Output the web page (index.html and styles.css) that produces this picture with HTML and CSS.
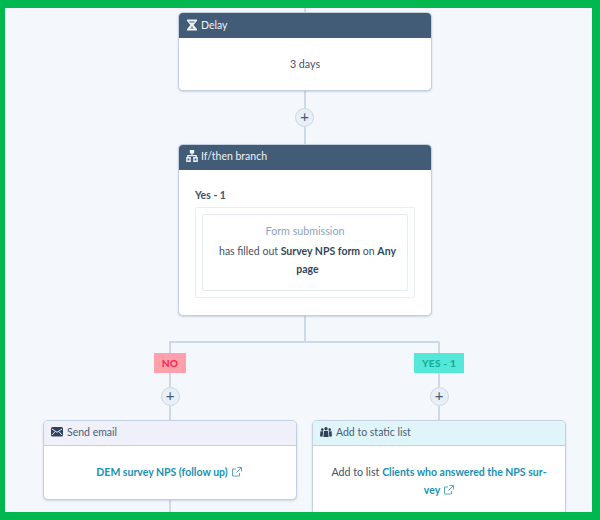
FILE: index.html
```html
<!DOCTYPE html>
<html lang="en">
<head>
<meta charset="utf-8">
<title>Workflow</title>
<link rel="stylesheet" href="styles.css">
</head>
<body>
<div class="frame">
  <div class="line v l-top"></div>
  <div class="line v l-mid"></div>
  <div class="line v l-trunk"></div>
  <div class="line h l-split"></div>
  <div class="line v l-no"></div>
  <div class="line v l-yes"></div>
  <div class="line v l-tail"></div>

  <section class="card delay">
    <header class="head dark">
      <svg class="ico" viewBox="0 0 12 12"><path fill="currentColor" d="M1 .5h10v2H10C9.800 4.200 8.300 5 7.500 6c.8 1 2.300 1.800 2.500 3.500h1v2H1v-2h1C2.200 7.800 3.700 7 4.500 6 3.700 5 2.200 4.200 2 2.500H1z"/><path fill="#425b76" d="M3.300 2.500h5.400c-.1.400-.2.700-.4 1H3.700c-.2-.3-.3-.6-.4-1zM5.600 7.200h.8v1.300l1.600 1.100H4L5.600 8.500z"/></svg>
      <span>Delay</span>
    </header>
    <div class="body plain">3 days</div>
  </section>

  <button class="plus p-mid">+</button>

  <section class="card branch">
    <header class="head dark head-branch">
      <svg class="ico" viewBox="0 0 12 12"><path fill="currentColor" d="M3.800 0h4.400v3.600H6.600V5h4.200v2h1v5H7.200V7h2.200v-.8H2.600V7h2.200v5H.2V7h1V5h4.200V3.600H3.800zM1.600 8.500v2h1.800v-2zM8.600 8.500v2h1.800v-2z"/></svg>
      <span>If/then branch</span>
    </header>
    <div class="branch-body">
      <div class="yes-title">Yes - 1</div>
      <div class="outer">
        <div class="inner">
          <div class="muted">Form submission</div>
          <p class="filter">has filled out <b>Survey NPS form</b> on <b>Any</b> <b>page</b></p>
        </div>
      </div>
    </div>
  </section>

  <div class="tag tag-no">NO</div>
  <div class="tag tag-yes">YES - 1</div>
  <button class="plus p-no">+</button>
  <button class="plus p-yes">+</button>

  <section class="card email">
    <header class="head lilac">
      <svg class="ico wide" viewBox="0 0 12 10"><rect width="12" height="9.500" rx="1.500" fill="#2f4259"/><path fill="none" stroke="#e6e9f5" stroke-width="1" d="M1 2l5 3.300L11 2M1 8l3.200-3.500M11 8L7.800 4.500"/></svg>
      <span>Send email</span>
    </header>
    <div class="body plain email-body">
      <a class="link">DEM survey NPS (follow up)<svg class="ext" viewBox="0 0 10 10"><path fill="none" stroke="currentColor" stroke-width="1" d="M7.500 6v3h-7V2h3.500M5.500.5h4v4M9.500.5L4.500 5.500"/></svg></a>
    </div>
  </section>

  <section class="card list">
    <header class="head sky">
      <svg class="ico wide" viewBox="0 0 12 10"><g fill="#2f4259"><circle cx="6" cy="1.700" r="1.700"/><circle cx="2.300" cy="2.600" r="1.300"/><circle cx="9.700" cy="2.600" r="1.300"/><path d="M3.900 4h4.200l.5 6H3.400zM.4 4.300h2.700L2.700 9.500H0zM8.900 4.300h2.700l.4 5.200H9.300z"/></g></svg>
      <span>Add to static list</span>
    </header>
    <div class="body list-body">
      <p>Add to list <a class="link">Clients who answered the NPS sur&shy;vey<svg class="ext" viewBox="0 0 10 10"><path fill="none" stroke="currentColor" stroke-width="1" d="M7.500 6v3h-7V2h3.500M5.500.5h4v4M9.500.5L4.500 5.500"/></svg></a></p>
    </div>
  </section>
</div>
</body>
</html>
```

FILE: styles.css
```css
* { box-sizing: border-box; }
html, body { margin: 0; padding: 0; }
body { width: 600px; height: 520px; overflow: hidden; font-family: Lato, "Open Sans", sans-serif; color: #3f5369; font-size: 10.700px; }
.frame { position: relative; width: 600px; height: 520px; border: solid #00b84f; border-width: 8px 8px 8px 5px; background: #f4f7fb; overflow: hidden; }

.line { position: absolute; background: #cdd9e6; }
.line.v { width: 2px; }
.line.h { height: 2px; }
.l-top { left: 298.500px; top: 0; height: 8px; }
.l-mid { left: 298.500px; top: 80px; height: 60px; }
.l-trunk { left: 298.500px; top: 305px; height: 30px; }
.l-split { left: 164px; top: 333px; width: 270px; }
.l-no { left: 164px; top: 334px; height: 80px; }
.l-yes { left: 433px; top: 334px; height: 80px; }
.l-tail { left: 164px; top: 490px; height: 20px; }

.card { position: absolute; display: flex; flex-direction: column; width: 254px; background: #fff; border: 1px solid #c3d0df; border-radius: 5px; overflow: hidden; box-shadow: 0 1px 2px rgba(120,145,175,.35); }
.delay { left: 173px; top: 4px; height: 79px; }
.branch { left: 173px; top: 136px; height: 172px; }
.email { left: 38px; top: 412px; height: 80px; }
.list { left: 307px; top: 412px; height: 110px; }

.head { display: flex; align-items: center; gap: 3px; height: 25px; flex: none; padding: 0 7px 2px; font-size: 10.500px; }
.head-branch { padding-bottom: 4px; }
.dark { background: #425b76; color: #eef2f7; }
.lilac { background: #f0f0fb; border-bottom: 1px solid #c3d0df; color: #4a5d72; gap: 4px; }
.sky { background: #e0f5fa; border-bottom: 1px solid #c3d0df; color: #4a5d72; gap: 4px; }
.ico { width: 12px; height: 12px; flex: none; }
.ico.wide { width: 12px; height: 10px; }

.body { flex: 1; display: flex; align-items: center; justify-content: center; text-align: center; }
.plain { color: #3f5369; padding-bottom: 2px; }
.email-body { padding-right: 2px; }
.list-body { align-items: flex-start; padding: 17px 14px 0; }
.list-body p { margin: 0; line-height: 18px; }

.link { color: #1a91b3; font-weight: 700; font-size: 10.500px; }
.ext { width: 10px; height: 10px; margin-left: 4px; vertical-align: -1px; color: #5fa6c2; }

.branch-body { padding: 18px 16px 0; }
.yes-title { font-weight: 700; font-size: 10.500px; line-height: 14px; margin-bottom: 5px; }
.outer { padding: 6px; border: 1px solid #e9eef5; border-radius: 2px; height: 91px; }
.inner { height: 77px; border: 1px solid #e4eaf2; border-radius: 2px; padding: 8px 9px 0; text-align: center; }
.muted { color: #8ea3bc; line-height: 16px; }
.filter { margin: 3px 0 0; padding-left: 5px; line-height: 18px; font-size: 10.500px; }
.filter b { font-weight: 700; color: #33475b; }

.plus { position: absolute; width: 19px; height: 19px; padding: 0 0 1px; border: 1px solid #cdd9e6; border-radius: 50%; background: #e9eff7; color: #425b76; font: 400 15px/15px Lato, sans-serif; text-align: center; }
.p-mid { left: 290px; top: 99.500px; }
.p-no { left: 155.500px; top: 378.500px; }
.p-yes { left: 424.500px; top: 378.500px; }

.tag { position: absolute; top: 345px; height: 20px; display: flex; align-items: center; justify-content: center; font-weight: 900; font-size: 10.200px; letter-spacing: .2px; }
.tag-no { left: 149px; width: 32px; background: #ffa1ad; color: #f2304f; }
.tag-yes { left: 409px; width: 50px; background: #55e8d8; color: #13ae98; }
```
